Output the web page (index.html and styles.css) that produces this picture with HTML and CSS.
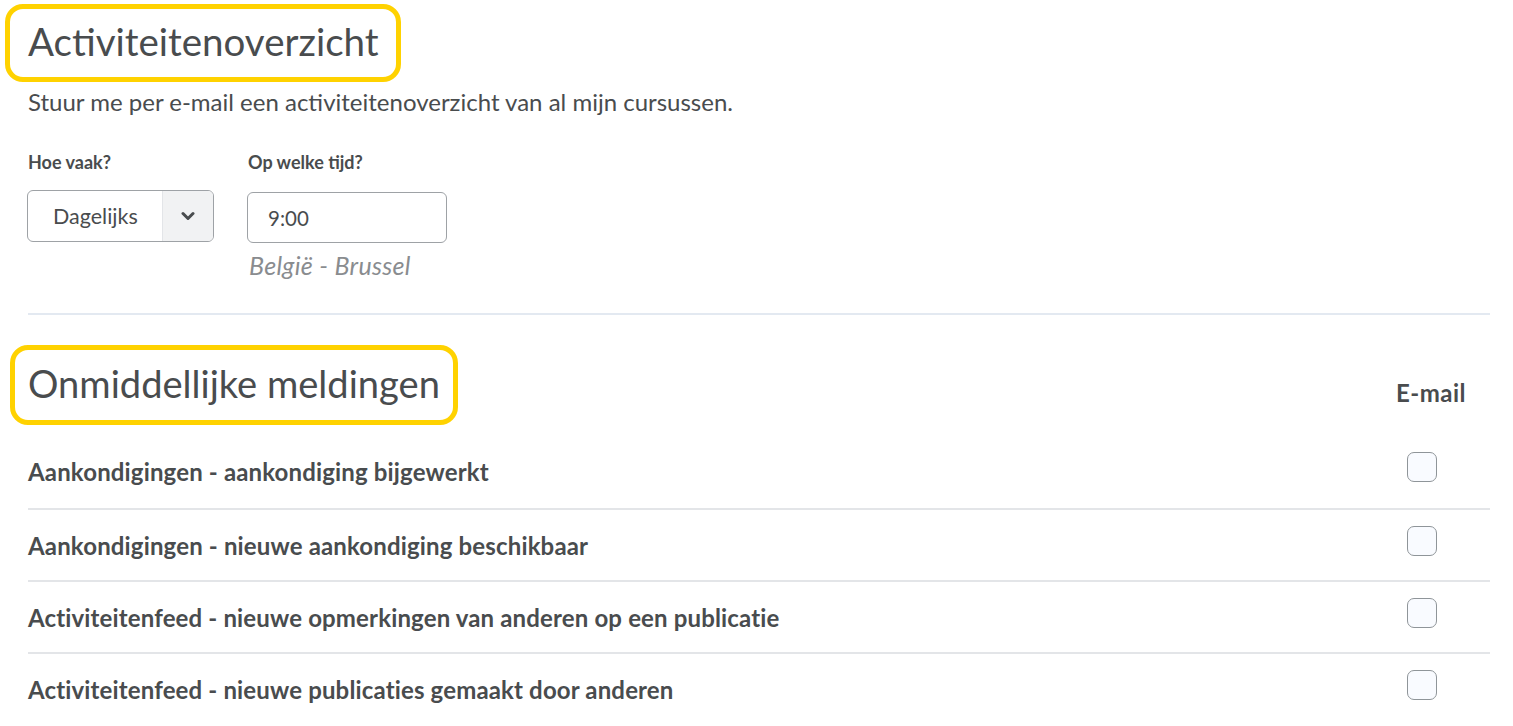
FILE: index.html
```html
<!DOCTYPE html>
<html lang="nl">
<head>
    <meta charset="UTF-8">
    <meta name="viewport" content="width=device-width, initial-scale=1.0">
    <title>Meldingen</title>
    <link rel="stylesheet" href="styles.css">
</head>
<body>

    <div class="page">

        <!-- Summary -->
        <section class="summary">
            <h1 class="highlight h1">Activiteitenoverzicht</h1>
            <p class="intro">Stuur me per e-mail een activiteitenoverzicht van al mijn cursussen.</p>

            <div class="fields">
                <div class="field">
                    <label class="label">Hoe vaak?</label>
                    <div class="select">
                        <span class="select-value">Dagelijks</span>
                        <span class="select-arrow">
                            <svg width="14" height="10" viewBox="0 0 14 10">
                                <path d="M2 2.5 L7 7.5 L12 2.5" fill="none" stroke="#494c4e" stroke-width="3" stroke-linecap="round" stroke-linejoin="round"/>
                            </svg>
                        </span>
                    </div>
                </div>
                <div class="field">
                    <label class="label">Op welke tijd?</label>
                    <div class="input">9:00</div>
                    <div class="timezone">België - Brussel</div>
                </div>
            </div>
        </section>

        <hr class="divider">

        <!-- Instant notifications -->
        <section class="instant">
            <div class="instant-head">
                <h2 class="highlight h2">Onmiddellijke meldingen</h2>
                <div class="col-title">E-mail</div>
            </div>

            <div class="rows">
                <div class="row">
                    <span class="row-label">Aankondigingen - aankondiging bijgewerkt</span>
                    <span class="checkbox"></span>
                </div>
                <div class="row">
                    <span class="row-label">Aankondigingen - nieuwe aankondiging beschikbaar</span>
                    <span class="checkbox"></span>
                </div>
                <div class="row">
                    <span class="row-label">Activiteitenfeed - nieuwe opmerkingen van anderen op een publicatie</span>
                    <span class="checkbox"></span>
                </div>
                <div class="row">
                    <span class="row-label">Activiteitenfeed - nieuwe publicaties gemaakt door anderen</span>
                    <span class="checkbox"></span>
                </div>
            </div>
        </section>

    </div>

</body>
</html>
```

FILE: styles.css
```css
/* General */
body {
    margin: 0;
    background: #fff;
    color: #494c4e;
    font-family: Lato, "Open Sans", sans-serif;
    overflow: hidden;
}

.page {
    padding: 4px 23px 0 28px;
}

/* Yellow highlight around headings */
.highlight {
    display: inline-block;
    border: 5px solid #ffd200;
    border-radius: 18px;
    font-weight: 400;
    font-size: 38.5px;
    line-height: 48px;
    margin: 0;
}

.h1 {
    padding: 8px 17px 12px 18px;
    margin-left: -23px;
}

.h2 {
    font-size: 38.1px;
    padding: 9px 13px 13px 13px;
    margin-left: -18px;
}

/* Summary */
.intro {
    font-size: 24px;
    line-height: 28px;
    margin: 6px 0 0;
}

.fields {
    display: flex;
    gap: 33px;
    margin: 35px 0 0 -1px;
}

.field {
    display: flex;
    flex-direction: column;
}

.label {
    font-size: 18px;
    font-weight: 700;
    line-height: 22px;
    margin: 0 0 17px 1px;
}

.select {
    display: flex;
    width: 185px;
    height: 50px;
    border: 1px solid #9ea2a6;
    border-radius: 6px;
    overflow: hidden;
}

.select-value {
    flex: 1;
    display: flex;
    align-items: center;
    padding-left: 25px;
    font-size: 21.5px;
}

.select-arrow {
    width: 50px;
    display: flex;
    align-items: center;
    justify-content: center;
    background: #f1f2f3;
    border-left: 1px solid #e3e5e8;
}

.input {
    width: 178px;
    height: 49px;
    margin-top: 2px;
    border: 1px solid #9ea2a6;
    border-radius: 6px;
    padding-left: 20px;
    display: flex;
    align-items: center;
    font-size: 20.5px;
}

.timezone {
    font-size: 25px;
    font-style: italic;
    letter-spacing: 0.3px;
    color: #898c8f;
    line-height: 28px;
    margin-top: 8px;
    padding-left: 2px;
}

.divider {
    border: 0;
    border-top: 2px solid #e3e9f1;
    margin: 34px 0 0;
}

/* Instant notifications */
.instant {
    margin-top: 30px;
}

.instant-head {
    display: flex;
    justify-content: space-between;
    align-items: flex-end;
}

.col-title {
    font-size: 24px;
    font-weight: 700;
    letter-spacing: 0.5px;
    line-height: 28px;
    margin: 0 24px 18px 0;
}

.rows {
    margin-top: 11px;
}

.row {
    display: flex;
    justify-content: space-between;
    align-items: flex-start;
    height: 72px;
    box-sizing: border-box;
}

.row + .row {
    border-top: 2px solid #e3e5e8;
}

.row-label {
    font-size: 24px;
    font-weight: 700;
    letter-spacing: 0.15px;
    line-height: 28px;
    margin-top: 22px;
}

.checkbox {
    width: 28px;
    height: 28px;
    margin: 16px 53px 0 0;
    border: 1px solid #8f9599;
    border-radius: 7px;
    background: #f9fbff;
}
```
